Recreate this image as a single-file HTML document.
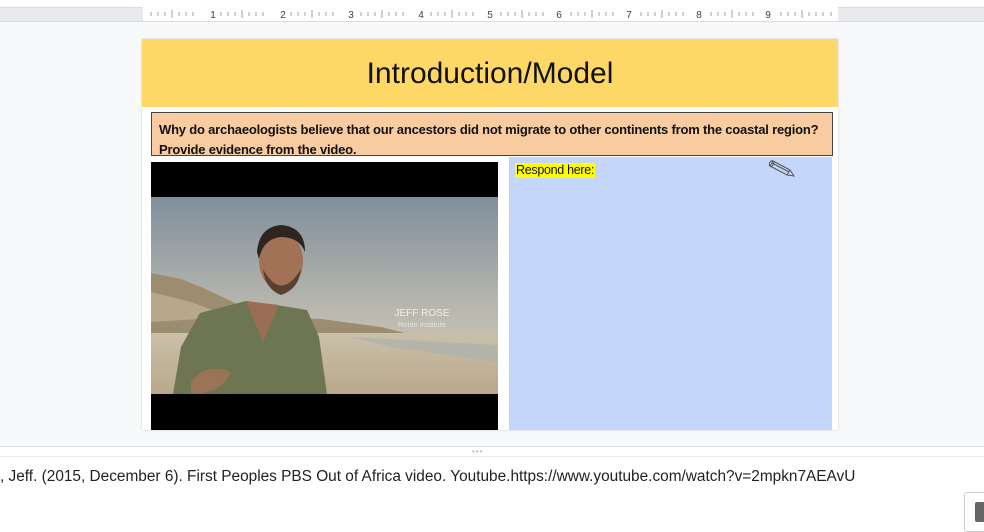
<!DOCTYPE html>
<html><head><meta charset="utf-8"><style>
*{margin:0;padding:0;box-sizing:border-box}
body{width:984px;height:528px;overflow:hidden;background:#fff;font-family:"Liberation Sans",sans-serif;position:relative}
.abs{position:absolute}
</style></head><body>
<div class="abs" style="left:0;top:7px;width:984px;height:15px;background:#e8eaed;border-top:1px solid #dadce0;border-bottom:1px solid #dadce0"></div>
<div class="abs" style="left:143px;top:7px;width:695px;height:14px;background:#fff"></div>
<svg class="abs" style="left:143px;top:7px" width="695" height="14">
<g stroke="#9aa0a6" stroke-width="1">
<path d="M8 5v4M15 5v4M22 5v4M36 5v4M43 5v4M50 5v4M78 5v4M85 5v4M92 5v4M106 5v4M113 5v4M120 5v4M148 5v4M155 5v4M162 5v4M176 5v4M183 5v4M190 5v4M218 5v4M225 5v4M232 5v4M246 5v4M253 5v4M260 5v4M288 5v4M295 5v4M302 5v4M316 5v4M323 5v4M330 5v4M358 5v4M365 5v4M372 5v4M386 5v4M393 5v4M400 5v4M428 5v4M435 5v4M442 5v4M456 5v4M463 5v4M470 5v4M498 5v4M505 5v4M512 5v4M526 5v4M533 5v4M540 5v4M568 5v4M575 5v4M582 5v4M596 5v4M603 5v4M610 5v4M638 5v4M645 5v4M652 5v4M666 5v4M673 5v4M680 5v4M688 5v4"/>
<path d="M29 3v8M99 3v8M169 3v8M239 3v8M309 3v8M379 3v8M449 3v8M519 3v8M589 3v8M659 3v8"/>
</g>
<g font-size="10" fill="#3c4043" text-anchor="middle" font-family="Liberation Sans">
<text x="70" y="11">1</text><text x="140" y="11">2</text><text x="208" y="11">3</text><text x="278" y="11">4</text><text x="347" y="11">5</text><text x="416" y="11">6</text><text x="486" y="11">7</text><text x="556" y="11">8</text><text x="625" y="11">9</text></g>
</svg>
<div class="abs" style="left:0;top:22px;width:984px;height:424px;background:#f8f9fa"></div>
<div class="abs" style="left:142px;top:39px;width:696px;height:391px;background:#fff;box-shadow:0 0 2px rgba(0,0,0,.2)"></div>
<div class="abs" style="left:142px;top:39px;width:696px;height:68px;background:#fed866;text-align:center;font-size:30px;line-height:70px;color:#111">Introduction/Model</div>
<div class="abs" style="left:151px;top:112px;width:682px;height:44px;background:#f8cba0;border:1px solid #444;padding:7px 0 0 7px;font-weight:bold;font-size:13px;line-height:20px;color:#111;letter-spacing:-0.2px;white-space:nowrap;overflow:hidden">Why do archaeologists believe that our ancestors did not migrate to other continents from the coastal region?<br>Provide evidence from the video.</div>
<div class="abs" style="left:509px;top:157px;width:323px;height:273px;background:#c4d7fb"></div>
<div class="abs" style="left:515px;top:163px;background:#ffff00;font-size:12.5px;line-height:15px;padding:0 1px;color:#111;letter-spacing:-0.3px">Respond here:</div>
<svg class="abs" style="left:768px;top:157px" width="30" height="22"><g fill="none" stroke="#555" stroke-width="1"><path d="M5 4l17 9-3 5L2 9z"/><path d="M4 6l17 9M22 13l4 6-7-1"/><ellipse cx="3.5" cy="6.5" rx="2" ry="3" transform="rotate(28 3.5 6.5)"/></g></svg>
<div class="abs" style="left:151px;top:162px;width:347px;height:268px;background:#000"></div>
<svg class="abs" style="left:151px;top:197px" width="347" height="197">
<defs><linearGradient id="sky" x1="0" y1="0" x2="0" y2="1"><stop offset="0" stop-color="#7f8f9b"/><stop offset=".6" stop-color="#bcbab0"/><stop offset="1" stop-color="#cfc6b2"/></linearGradient>
<linearGradient id="sand" x1="0" y1="0" x2="0" y2="1"><stop offset="0" stop-color="#c9c0aa"/><stop offset="1" stop-color="#b9a88a"/></linearGradient></defs>
<rect width="347" height="197" fill="url(#sky)"/>
<path d="M0 76L30 82 50 90 80 104 110 120 170 122 230 130 270 140 0 140z" fill="#9c8c70"/>
<path d="M0 95L40 105 80 120 0 125z" fill="#b8a88a"/>
<rect y="136" width="347" height="61" fill="url(#sand)"/>
<path d="M200 140L347 148 347 165 240 150z" fill="#a9b0ad" opacity=".6"/>
<path d="M22 197L30 150 49 116 95 104 125 108 156 113 168 140 176 197z" fill="#6d7552"/>
<path d="M95 104L112 145 128 108z" fill="#9a6e55"/>
<ellipse cx="130" cy="64" rx="22" ry="29" fill="#a27257"/>
<path d="M106 55Q108 30 130 28 154 30 154 55 148 40 130 40 112 42 108 62z" fill="#2d2520"/>
<path d="M112 72Q130 105 150 72 148 92 130 98 114 92 112 72z" fill="#5a4030"/>
<path d="M40 185Q55 165 80 175 70 197 40 197z" fill="#a67358" opacity=".8"/>
<text x="271" y="119" fill="#eeeeea" font-size="10" text-anchor="middle" font-family="Liberation Sans">JEFF ROSE</text>
<text x="271" y="130" fill="#e8e6df" font-size="7.5" text-anchor="middle" font-family="Liberation Sans">Ronin Institute</text>
</svg>
<div class="abs" style="left:0;top:446px;width:984px;height:11px;background:#fff;border-top:1px solid #dadce0;border-bottom:1px solid #e8eaed"></div>
<div class="abs" style="left:472px;top:449px;font-size:8px;color:#bbb;letter-spacing:1px;line-height:6px">•••</div>
<div class="abs" style="left:0;top:468px;font-size:15.4px;color:#222;white-space:nowrap;line-height:18px">, Jeff. (2015, December 6). First Peoples PBS Out of Africa video. Youtube.https://www.youtube.com/watch?v=2mpkn7AEAvU</div>
<div class="abs" style="left:964px;top:492px;width:24px;height:40px;background:#fff;border:1px solid #ccc;border-radius:3px"></div>
<div class="abs" style="left:975px;top:502px;width:12px;height:20px;background:#666;border-radius:2px"></div>
</body></html>
